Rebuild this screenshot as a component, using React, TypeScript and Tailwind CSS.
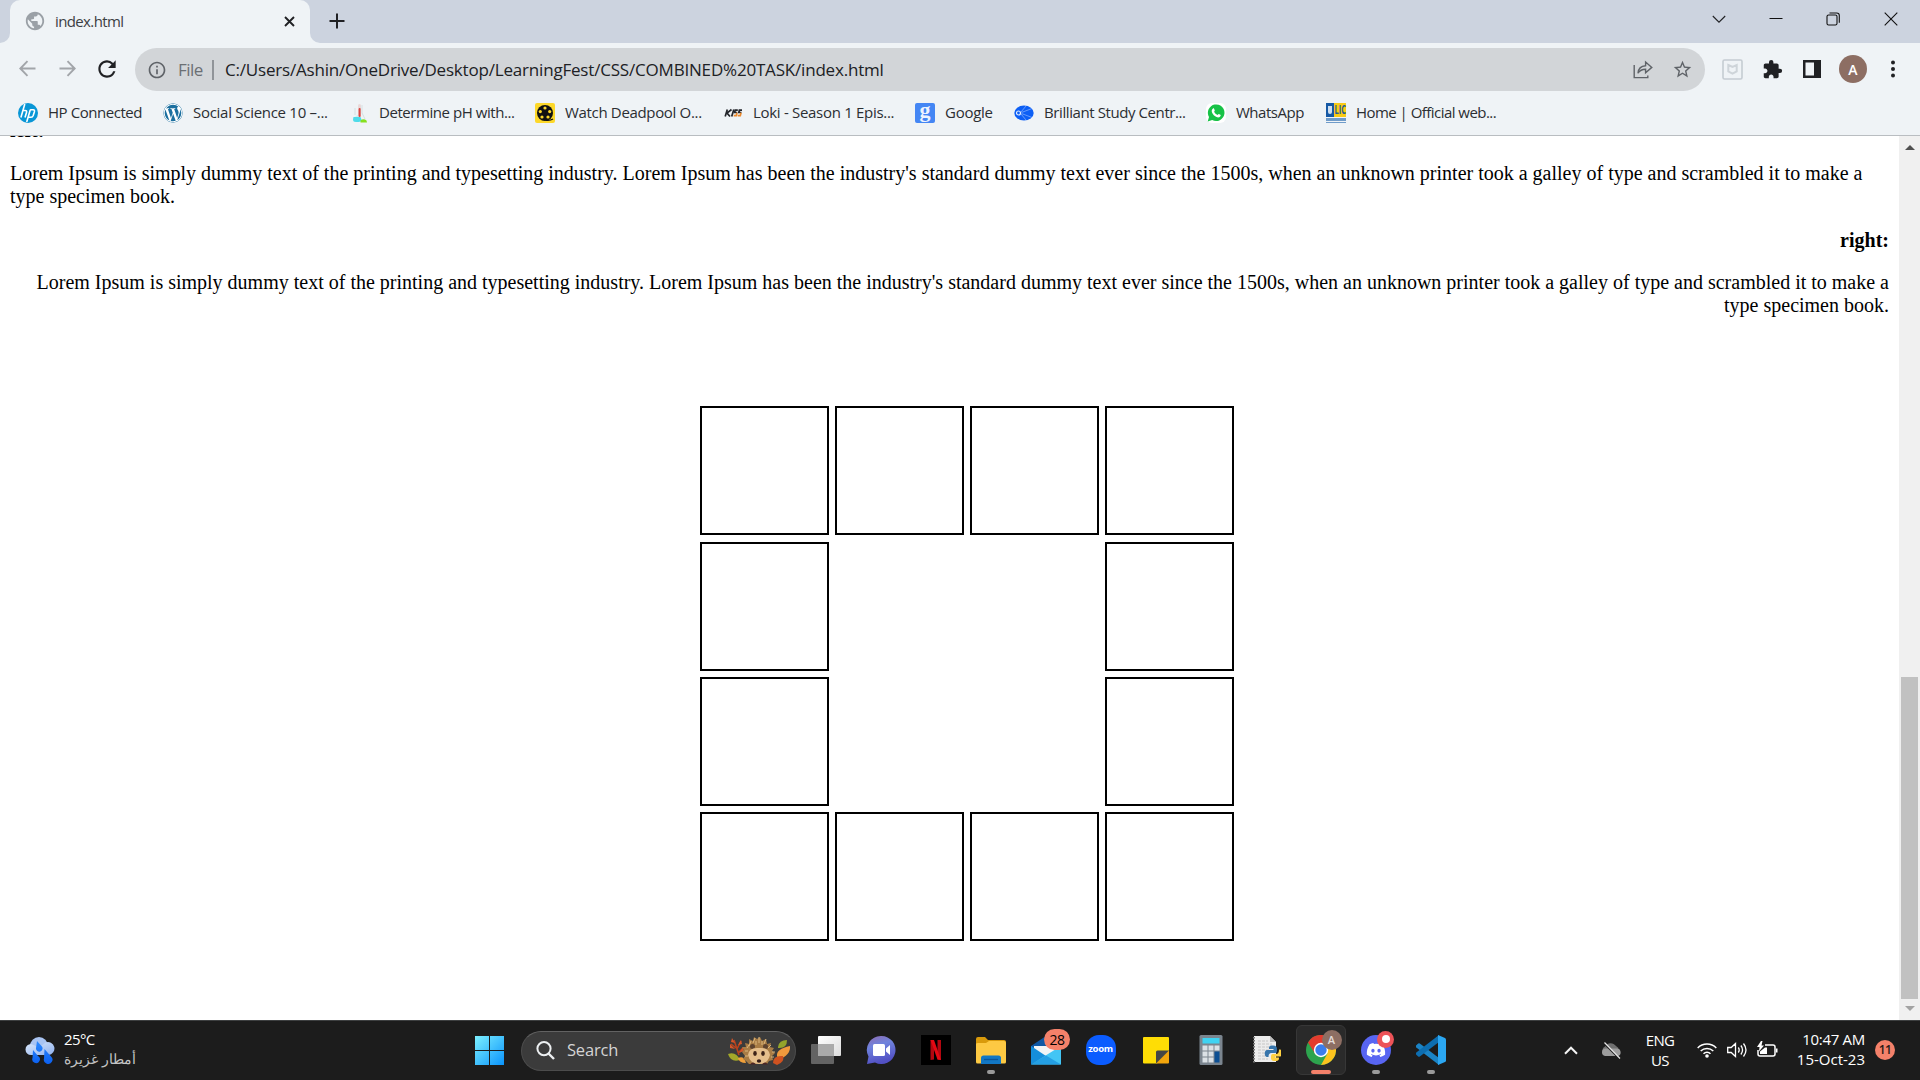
import type { ReactNode } from 'react';
import { MdPublic, MdInfoOutline, MdExtension, MdStarBorder, MdRefresh } from 'react-icons/md';
import { FaWordpress, FaDiscord } from 'react-icons/fa';

const LOREM =
  "Lorem Ipsum is simply dummy text of the printing and typesetting industry. Lorem Ipsum has been the industry's standard dummy text ever since the 1500s, when an unknown printer took a galley of type and scrambled it to make a type specimen book.";

function TabStrip() {
  return (
    <div className="flex h-[43px] items-stretch bg-[#ccd3df]">
      <svg className="h-[43px] w-[10px]" viewBox="0 0 10 43">
        <path d="M0 43h10V33a10 10 0 0 1-10 10z" fill="#eff3f6" />
      </svg>
      <div className="flex w-[300px] items-center rounded-t-[10px] bg-[#eff3f6] pr-[14px] pl-[14px]">
        <MdPublic className="-mt-px size-[22px] text-[#9aa0a6]" />
        <span className="ml-[9px] flex-1 pb-px text-[15px] tracking-[-0.62px] text-[#3c4043]">index.html</span>
        <svg className="size-[13px]" viewBox="0 0 13 13" stroke="#202124" strokeWidth="1.9">
          <path d="M2 2l9 9M11 2l-9 9" />
        </svg>
      </div>
      <svg className="h-[43px] w-[10px]" viewBox="0 0 10 43">
        <path d="M10 43H0V33a10 10 0 0 0 10 10z" fill="#eff3f6" />
      </svg>
      <svg className="mt-[13px] ml-[9px] size-4" viewBox="0 0 16 16" stroke="#202124" strokeWidth="2">
        <path d="M8 .5v15M.5 8h15" />
      </svg>
      <div className="ml-auto flex h-[37px] items-center pr-[22px]">
        <svg className="mr-[43px] size-[14px]" viewBox="0 0 14 14" fill="none" stroke="#202124" strokeWidth="1.1">
          <path d="M.8 4l6.2 6.2L13.2 4" />
        </svg>
        <svg className="mr-[43px] size-[14px]" viewBox="0 0 14 14" stroke="#111" strokeWidth="1">
          <path d="M.5 6.500h13" />
        </svg>
        <svg className="mr-[44px] size-[14px]" viewBox="0 0 14 14" fill="none" stroke="#111" strokeWidth="1.1">
          <rect x="1" y="3" width="10" height="10" rx="1.6" />
          <path d="M3.5 1h7.200a2.600 2.600 0 0 1 2.600 2.600v7.200" />
        </svg>
        <svg className="size-[14px]" viewBox="0 0 14 14" stroke="#111" strokeWidth="1.1">
          <path d="M.7.7l12.600 12.600M13.300.7L.7 13.300" />
        </svg>
      </div>
    </div>
  );
}

function Toolbar() {
  return (
    <div className="flex h-[53px] items-center bg-[#eff3f6]">
      <div className="flex items-center pb-[2px]">
        <svg className="ml-[19px] size-[17px]" viewBox="0 0 17 17" fill="none" stroke="#a2a5a9" strokeWidth="1.9">
          <path d="M16.500 8.500H1.500M8.500 1.200L1.300 8.500l7.200 7.300" />
        </svg>
        <svg className="ml-[23px] size-[17px]" viewBox="0 0 17 17" fill="none" stroke="#a2a5a9" strokeWidth="1.9">
          <path d="M.5 8.500h15M8.500 1.200l7.200 7.300-7.200 7.300" />
        </svg>
        <MdRefresh className="mr-px ml-[18px] size-[26px] text-[#202124]" />
      </div>
      <div className="ml-[14px] flex h-[43px] w-[1570px] items-center rounded-full bg-[#d2d5d8] pr-[12px] pl-[12px]">
        <MdInfoOutline className="size-5 text-[#5f6368]" />
        <span className="ml-[11px] w-[26px] text-[17px] tracking-[-0.5px] text-[#6b6f74]">File</span>
        <span className="ml-[8px] h-5 w-[2px] bg-[#909499]" />
        <span className="ml-[11px] text-[17px] tracking-[-0.19px] whitespace-nowrap text-[#202124]">
          C:/Users/Ashin/OneDrive/Desktop/LearningFest/CSS/COMBINED%20TASK/index.html
        </span>
        <svg className="ml-auto h-[19px] w-5" viewBox="0 0 20 19" fill="none" stroke="#5f6368" strokeWidth="1.4">
          <path d="M1.200 5v12.600h13.600v-2" />
          <path d="M5 13.200C5.300 8.600 8 6 12.600 5.700V2l6.200 5.400-6.200 5.400V9.300C9 9.300 6.800 10.300 5 13.200z" />
        </svg>
        <MdStarBorder className="ml-[19px] size-[21px] text-[#5f6368]" />
      </div>
      <div className="flex items-center pb-px">
        <svg className="ml-[17px] size-[21px]" viewBox="0 0 21 21" fill="none">
          <rect x="1" y="1" width="19" height="19" rx="1.500" stroke="#c5ccd2" strokeWidth="1.6" />
          <path d="M6.300 6l4.200 2 4.200-2v6.500l-4.200 2.200-4.200-2.200z" stroke="#ced4d9" strokeWidth="2" />
        </svg>
        <MdExtension className="ml-[19px] size-[21px] text-[#202124]" />
        <svg className="ml-[20px] size-[18px]" viewBox="0 0 18 18">
          <path d="M0 0h18v18H0zM2.500 2.500v13H11v-13z" fill="#202124" fillRule="evenodd" />
        </svg>
        <div className="ml-[18px] flex size-7 items-center justify-center rounded-full bg-[#8d6e63] text-[14px] font-semibold text-white">
          A
        </div>
        <svg className="ml-[23px] h-[18px] w-[6px]" viewBox="0 0 6 18" fill="#202124">
          <circle cx="3" cy="2.500" r="2" />
          <circle cx="3" cy="9" r="2" />
          <circle cx="3" cy="15.500" r="2" />
        </svg>
      </div>
    </div>
  );
}

function Bookmark({ icon, label, className }: { icon: ReactNode; label: string; className: string }) {
  return (
    <div className={`flex shrink-0 items-center text-[15px] whitespace-nowrap text-[#2b2e32] ${className}`}>
      <span className="mr-[10px] flex size-5 shrink-0 items-center justify-center">{icon}</span>
      {label}
    </div>
  );
}

const HpIcon = (
  <svg className="size-5" viewBox="0 0 20 20">
    <circle cx="10" cy="10" r="10" fill="#0996d6" />
    <g fill="none" stroke="#fff" strokeWidth="1.600">
      <path d="M6.800 1L2.900 14.500M4.600 7.500h2.600c1.300 0 1.700.7 1.300 1.900L7 14.500" />
      <path d="M12.300 6.700L8.700 19M12.300 6.800h2.800c1.200 0 1.600.7 1.300 1.900l-1.200 3.800c-.4 1.100-1 1.700-2.200 1.700h-2.600" />
    </g>
  </svg>
);

const FlaskIcon = (
  <svg className="size-5" viewBox="0 0 20 20">
    <path d="M8.500 12l-2 1.500Q3.500 15 4 17q.5 2 3.500 2h4q2-1 1-3l-2-3z" fill="#c9f1f5" />
    <path d="M4.500 14h7l1 3q-.5 2-3 2H7q-3 0-3-2.500z" fill="#4fdbe9" />
    <path d="M6 5v7M13 2v8l3 6" stroke="#d5dfe2" strokeWidth="1" fill="none" />
    <rect x="9" y="1" width="3" height="13" rx="1.500" fill="#e9d9d9" />
    <rect x="9.600" y="5" width="2" height="9" rx="1" fill="#d9443f" />
    <path d="M11.500 17.500q3-2.500 6 0l.5 2h-6.500z" fill="#86e01f" />
  </svg>
);

const ReelIcon = (
  <svg className="size-5" viewBox="0 0 20 20">
    <rect width="20" height="20" rx="2" fill="#fdd829" />
    <circle cx="10" cy="10" r="8" fill="#111" />
    <path d="M11 17.200q4 .6 7-1.200" stroke="#111" strokeWidth="1.400" fill="none" />
    <g fill="#fdd829">
      <circle cx="10" cy="5" r="1.600" />
      <circle cx="5.300" cy="8.600" r="1.600" />
      <circle cx="14.700" cy="8.600" r="1.600" />
      <circle cx="7" cy="14" r="1.600" />
      <circle cx="13" cy="14" r="1.600" />
    </g>
  </svg>
);

const KissIcon = (
  <svg className="size-5" viewBox="0 0 20 20" fill="none" strokeWidth="1.700">
    <path d="M4.300 6.500L2.200 13.500M8.500 6.500L4 10l3 3.500M10.800 6.500L8.700 13.500" stroke="#23252b" />
    <path d="M14.800 7.200h-2.600l-.6 2.300h2.600M19 7.200h-2.600l-.6 2.300h2.600" stroke="#23252b" />
    <path d="M14 9.800l-.7 2.800h-2.600M18 9.800l-.7 2.800h-2.600" stroke="#ea8a2f" />
  </svg>
);

const GoogleIcon = (
  <span className="flex size-5 items-center justify-center rounded-[2px] bg-[#4486f4] pb-[5px] font-['Liberation_Serif',serif] text-[22px] leading-5 font-bold tracking-normal text-[#eef4ff]">
    g
  </span>
);

const BrilliantIcon = (
  <svg className="size-5" viewBox="0 0 20 20">
    <ellipse cx="10" cy="10" rx="9.700" ry="7.600" fill="#0d5ff5" />
    <path d="M7 9L12 3M7.500 9.500L18 5.500M7.500 10.500L18 14.500M7 11l5 6" stroke="#8db5ff" strokeWidth=".7" />
    <circle cx="4.500" cy="10" r="2" fill="#0d5ff5" stroke="#dfeaff" strokeWidth="1.200" />
  </svg>
);

const WhatsAppIcon = (
  <span className="flex size-5 items-center justify-center rounded-md bg-white">
    <svg className="size-[18px]" viewBox="0 0 18 18">
      <path d="M.7 17.500l1.300-4.600A8.300 8.300 0 1 1 5.200 16z" fill="#17c247" />
      <path
        d="M6 4.500c.4-.3.900-.2 1.100.3l.7 1.600c.1.500-.7 1-.7 1.400.8 1.500 1.900 2.500 3.300 3.100.5 0 .9-1 1.400-.9l1.600.8c.8.5-.1 2.200-1.100 2.500-3.300.8-7.800-3.600-7.600-6.600.1-.9.600-1.700 1.300-2.200z"
        fill="#fff"
      />
    </svg>
  </span>
);

const LicIcon = (
  <span className="flex h-5 w-5 flex-col leading-none">
    <span className="flex h-[14px] shrink-0">
      <span className="flex w-[8px] shrink-0 items-center justify-center bg-[#1659a5]">
        <span className="h-[8px] w-[4px] rounded-b-full bg-[#cfdff0]" />
      </span>
      <span className="flex w-[12px] shrink-0 items-center justify-center bg-[#f9cb15]">
        <span className="scale-x-[0.62] text-[12px] font-bold tracking-normal text-[#1f5b96]">LIC</span>
      </span>
    </span>
    <span className="mt-px h-[3px] shrink-0 bg-[#6f9bc9]" />
    <span className="mt-px h-px shrink-0 bg-[#6f9bc9]" />
  </span>
);

function BookmarksBar() {
  return (
    <div className="flex h-[40px] items-center border-b border-[#b9bdc1] bg-[#eff3f6] pb-[6px] pl-[18px]">
      <Bookmark className="w-[145px] tracking-[-0.450px]" label="HP Connected" icon={HpIcon} />
      <Bookmark
        className="w-[186px] tracking-[-0.280px]"
        label="Social Science 10 –..."
        icon={<FaWordpress className="size-5 rounded-full bg-white text-[#1c6f9f]" />}
      />
      <Bookmark className="w-[186px] tracking-[-0.440px]" label="Determine pH with..." icon={FlaskIcon} />
      <Bookmark className="w-[188px] tracking-[-0.330px]" label="Watch Deadpool O..." icon={ReelIcon} />
      <Bookmark className="w-[192px] tracking-[-0.300px]" label="Loki - Season 1 Epis..." icon={KissIcon} />
      <Bookmark className="w-[99px] tracking-[-0.260px]" label="Google" icon={GoogleIcon} />
      <Bookmark className="w-[192px] tracking-[-0.410px]" label="Brilliant Study Centr..." icon={BrilliantIcon} />
      <Bookmark className="w-[120px] tracking-[-0.480px]" label="WhatsApp" icon={WhatsAppIcon} />
      <Bookmark className="w-[172px] tracking-[-0.540px]" label="Home | Official web..." icon={LicIcon} />
    </div>
  );
}

const Box = () => <div className="size-[129px] border-2 border-black" />;

function BoxRow({ hollow = false }: { hollow?: boolean }) {
  return (
    <div className="flex w-[534px] justify-between">
      <Box />
      {!hollow && <Box />}
      {!hollow && <Box />}
      <Box />
    </div>
  );
}

function Page() {
  return (
    <div className="flex h-[884px] overflow-hidden bg-white">
      <main className="-mt-[17px] flex-1 px-[10px] font-['Liberation_Serif','Times_New_Roman',serif] text-[20px] leading-[23px] text-black">
        <p className="mb-[20px] font-bold">left:</p>
        <p>{LOREM}</p>
        <div className="text-right">
          <p className="mt-[21px] font-bold">right:</p>
          <p className="mt-[19px]">{LOREM}</p>
        </div>
        <div className="mt-[89px] ml-[690px] flex flex-col gap-[6px]">
          <div className="mb-px">
            <BoxRow />
          </div>
          <BoxRow hollow />
          <BoxRow hollow />
          <BoxRow />
        </div>
      </main>
      <div className="flex w-[21px] flex-col items-center bg-[#f0f0f0]">
        <svg className="mt-[9px] h-[5px] w-[10px]" viewBox="0 0 10 5">
          <path d="M0 5L5 0l5 5z" fill="#505050" />
        </svg>
        <div className="mt-auto h-[322px] w-[17px] bg-[#c1c1c1]" />
        <svg className="mt-[7px] mb-[9px] h-[5px] w-[10px]" viewBox="0 0 10 5">
          <path d="M0 0l5 5 5-5z" fill="#a3a3a3" />
        </svg>
      </div>
    </div>
  );
}

function WeatherIcon() {
  return (
    <svg className="size-[30px]" viewBox="0 0 30 30">
      <defs>
        <linearGradient id="cloud" x1="0" y1="0" x2="1" y2="1">
          <stop offset="0" stopColor="#dbe9fc" />
          <stop offset="1" stopColor="#8fb1ee" />
        </linearGradient>
        <linearGradient id="drop" x1="0" y1="0" x2="0" y2="1">
          <stop offset="0" stopColor="#2f8bff" />
          <stop offset="1" stopColor="#0b60f0" />
        </linearGradient>
      </defs>
      <circle cx="14" cy="11" r="9" fill="#a9c4f2" />
      <path d="M6 9a5.500 5.500 0 0 0 0 11h17.500a6.500 6.500 0 1 0-3-12.500l-6 5z" fill="url(#cloud)" />
      <path
        d="M12 6l4.500 5a3.300 3.300 0 1 1-5.500 2zM8 15l5 6a3.800 3.800 0 1 1-5.500 2zM19.500 14l6.500 7.500a4.300 4.300 0 1 1-7 2z"
        fill="url(#drop)"
      />
    </svg>
  );
}

function SearchArt() {
  return (
    <svg className="h-[29px] w-[63px]" viewBox="0 0 63 29">
      <path d="M11 19L6 4M9 13l4-8M10 17l5-5M8 12L3 8" stroke="#b5421d" strokeWidth="1.600" />
      <path d="M4 2l3 5-4-1zM13 4l-3 5 4-1zM2 8l5 5-5-1zM15 11l-4 6 5-2z" fill="#d5572a" />
      <path d="M0 18q8-3 12 6-9 3-12-6z" fill="#a3a829" />
      <path d="M10 22q6-3 8 5-7 0-8-5z" fill="#f0a03a" />
      <path d="M50 11q1-7 9-7 0 9-9 8z" fill="#94a52b" />
      <path d="M49 20q-1-7 13-10 1 9-12 14z" fill="#f09a3d" />
      <path d="M45 27q0-8 10-7 2 6-6 9z" fill="#cf5220" />
      <path
        d="M14 16l2-2-2-3 4 0-1-4 4 1 0-5 4 2 1-4 3 2 3-2 2 4 4-2 1 5 4-1-1 4 4 1-2 3 3 2-3 3 1 4-4 1-2 3H21l-3-3-3-2 2-3z"
        fill="#a87c45"
      />
      <path
        d="M21 10l2-5M25 7l2-5M31 7V1M36 8l2-5M40 12l3-3M17 15h3M44 16h3M17 20h3M43 21h3M28 9V5M34 9V5M19 12l2-3"
        stroke="#e0bd84"
        strokeWidth=".9"
      />
      <circle cx="24.500" cy="10.500" r="2.500" fill="#5e432f" />
      <circle cx="37.500" cy="10.500" r="2.500" fill="#5e432f" />
      <path d="M20 19q1-8 11-7 10-1 11 7-2 9-11 9t-11-9z" fill="#e5bf8c" />
      <ellipse cx="27" cy="17.500" rx="1.800" ry="2.400" fill="#3c2318" />
      <ellipse cx="35" cy="17.500" rx="1.800" ry="2.400" fill="#3c2318" />
      <ellipse cx="31" cy="25" rx="2.200" ry="1.700" fill="#331b17" />
      <path d="M22 28.500q3-4 6 0zM34 28.500q3-4 6 0z" fill="#4b2525" />
    </svg>
  );
}

/** One taskbar slot, with its optional running marker below the icon. */
function TaskbarSlot({ children, running = false }: { children: ReactNode; running?: boolean }) {
  return (
    <div className="relative flex h-[59px] w-[55px] shrink-0 items-center justify-center">
      {children}
      {running && <span className="absolute bottom-[6px] left-[24px] h-1 w-2 rounded-full bg-[#9a9a9a]" />}
    </div>
  );
}

function Taskbar() {
  return (
    <footer className="flex h-[60px] items-center border-t border-[#3d3f40] bg-[#1c1c1c] text-[15px] text-white">
      <div className="flex w-[475px] items-center gap-[9px] pb-[2px] pl-[25px]">
        <WeatherIcon />
        <div className="pb-[2px] leading-5">
          <div className="tracking-[-0.600px]">25°C</div>
          <div className="text-[14.200px] text-[#c4c4c4]" dir="rtl">
            أمطار غزيرة
          </div>
        </div>
      </div>
      <svg className="size-[29px]" viewBox="0 0 29 29">
        <defs>
          <linearGradient id="win" x1="0" y1="0" x2="1" y2="1">
            <stop offset="0" stopColor="#7cf0ff" />
            <stop offset="1" stopColor="#0a93fb" />
          </linearGradient>
        </defs>
        <path d="M0 0h14v14H0zM15 0h14v14H15zM0 15h14v14H0zM15 15h14v14H15z" fill="url(#win)" />
      </svg>
      <div className="ml-[17px] flex h-10 w-[275px] items-center rounded-full border border-[#4c4c4c] border-t-[#626262] bg-[#3b3b3b] pr-[4px] pl-[14px]">
        <svg className="size-[19px]" viewBox="0 0 19 19" fill="none" stroke="#eceff1" strokeWidth="2">
          <circle cx="8" cy="7.600" r="6.600" />
          <path d="M12.500 12.500l5.500 5.500" strokeWidth="2.400" />
        </svg>
        <span className="ml-[12px] flex-1 text-[16.500px] tracking-[-0.200px] text-[#d4d4d4]">Search</span>
        <SearchArt />
      </div>
      <div className="ml-[2px] flex pb-px">
        <TaskbarSlot>
          <svg className="size-[30px]" viewBox="0 0 30 30">
            <defs>
              <linearGradient id="tv" x1="0" y1="0" x2="1" y2="1">
                <stop offset="0" stopColor="#ffffff" />
                <stop offset="1" stopColor="#dcdcdc" />
              </linearGradient>
            </defs>
            <rect x="7" y="1" width="23" height="20" rx="1" fill="url(#tv)" />
            <rect x="0" y="9" width="23" height="20" rx="1" fill="#636363" />
            <path d="M7 9h16v12H7z" fill="#aaaaaa" />
          </svg>
        </TaskbarSlot>
        <TaskbarSlot>
          <svg className="size-[30px]" viewBox="0 0 30 30">
            <defs>
              <linearGradient id="chat" x1="0" y1="0" x2="0.300" y2="1">
                <stop offset="0" stopColor="#8f6bb0" />
                <stop offset="0.400" stopColor="#6f83dd" />
                <stop offset="1" stopColor="#5250c4" />
              </linearGradient>
            </defs>
            <path d="M15.500 1A14 14 0 1 1 9 27.400L1 29l1.500-7.500A14 14 0 0 1 15.500 1z" fill="url(#chat)" />
            <rect x="7" y="9" width="12" height="12" rx="1.500" fill="#fff" />
            <path d="M20 13.500l4-3.500v10l-4-3.500z" fill="#fff" />
          </svg>
        </TaskbarSlot>
        <TaskbarSlot>
          <svg className="size-[30px]" viewBox="0 0 30 30">
            <rect width="30" height="30" fill="#000" />
            <path d="M9.500 5h3.500v19.500l-3.500.5zM16.500 5H20v20l-3.500-.5z" fill="#b20710" />
            <path d="M9.500 5H13l7 20-3.500-.5z" fill="#e50914" />
          </svg>
        </TaskbarSlot>
        <TaskbarSlot running>
          <svg className="size-[30px]" viewBox="0 0 30 30">
            <path d="M0 4q0-2 2-2h7l3 3h16q2 0 2 2v5H0z" fill="#d99a0b" />
            <path d="M0 9q0-1 2-1h8l3-2h15q2 0 2 2v19q0 1.500-1.500 1.500H1.500Q0 28.500 0 27z" fill="#fdc943" />
            <path d="M5 29v-6q0-2.500 2.500-2.500h15Q25 20.500 25 23v6z" fill="#1277c4" />
            <path d="M8 24.500h14" stroke="#0b559a" strokeWidth="1.300" />
          </svg>
        </TaskbarSlot>
        <TaskbarSlot>
          <svg className="size-[30px]" viewBox="0 0 30 30">
            <path d="M0 11L15 1l15 10v5L15 24 0 16z" fill="#0e57a4" />
            <path d="M3 11h24v6l-12 5L3 15z" fill="#f1f4f6" />
            <path d="M0 11l15 10L0 29.500z" fill="#158edb" />
            <path d="M30 11L0 29.500h30z" fill="#43c5f5" />
            <path d="M15 20.500L30 29.500H0z" fill="#249fe4" />
          </svg>
          <span className="absolute top-[8px] left-[26px] flex h-[21px] w-[26px] items-center justify-center rounded-full bg-[#f4816a] text-[14px] tracking-[-0.500px] text-black">
            28
          </span>
        </TaskbarSlot>
        <TaskbarSlot>
          <div className="flex size-[30px] items-center justify-center rounded-[13px] bg-[#0b5cff] pb-[2px] text-[9.500px] font-bold tracking-[-0.300px] text-white">
            zoom
          </div>
        </TaskbarSlot>
        <TaskbarSlot>
          <svg className="size-[30px]" viewBox="0 0 30 30">
            <path d="M2 3q0-1 1-1h24q1 0 1 1v13L16 28.500H3q-1 0-1-1z" fill="#ffdd05" />
            <path d="M15 28.500L28 15v12.500q0 1-1 1z" fill="#f2a50c" />
            <path d="M15 28.500V17q0-1.500 1.500-1.500H28z" fill="#454545" />
          </svg>
        </TaskbarSlot>
        <TaskbarSlot>
          <svg className="size-[30px]" viewBox="0 0 30 30">
            <rect x="3.500" width="23" height="30" rx="1.500" fill="#7b858f" />
            <rect x="6.500" y="3" width="17" height="5.500" fill="#3fd3f2" />
            <path
              d="M6.500 10.500h5v5h-5zM12.500 10.500h5v5h-5zM18.500 10.500h5v5h-5zM6.500 16.500h5v5h-5zM12.500 16.500h5v5h-5zM6.500 22.500h5v5h-5zM12.500 22.500h5v5h-5z"
              fill="#dbe1e6"
            />
            <path d="M18.500 16.500h5v11h-5z" fill="#0d4f93" />
          </svg>
        </TaskbarSlot>
        <TaskbarSlot>
          <svg className="size-[30px]" viewBox="0 0 30 30">
            <path d="M3 1h16l6 6v20H3z" fill="#ececec" />
            <path d="M19 1l6 6h-6z" fill="#bdbdbd" />
            <path d="M3 2v26" stroke="#777" strokeWidth="2" strokeDasharray="1.500 1.500" />
            <path
              d="M7 6h10M7 9h14M7 12h14M7 15h12M7 18h8M7 21h8M7 24h10"
              stroke="#c6c6c6"
              strokeWidth="1"
              strokeDasharray="3 1"
            />
            <path
              d="M22 10.500c-4 0-4 1.200-4 3.500h4.500v1H16c-3 0-3 7 0 7h1.500c0-3 1-4 3-4H24c2 0 2-1.200 2-4 0-2-1-3.500-4-3.500z"
              fill="#3775ab"
            />
            <path
              d="M24 26c4 0 4-1.200 4-3.500h-4v-1h5.500c2-1 1-6 0-7H28c0 3-1 4.500-3 4.500h-3c-2 0-2 1.200-2 3.500S20.500 26 24 26z"
              fill="#ffd141"
            />
          </svg>
        </TaskbarSlot>
        <TaskbarSlot>
          <div className="relative flex h-[50px] w-[50px] items-center justify-center rounded-md border border-[#373737] bg-[#2a2a2a]">
            <svg className="size-[30px]" viewBox="0 0 30 30">
              <circle cx="15" cy="15" r="15" fill="#2da44e" />
              <path d="M15 8.200h13.400A15 15 0 0 1 15 30l6.500-11.500z" fill="#fcc31e" />
              <path d="M2 7.500A15 15 0 0 1 28.400 8.200H15L9 18.500z" fill="#e33b2e" />
              <circle cx="15" cy="15" r="7.200" fill="#fff" />
              <circle cx="15" cy="15" r="5.700" fill="#3b7ded" />
            </svg>
            <span className="absolute top-[4px] left-[25px] flex size-5 items-center justify-center rounded-full bg-[#8d6e63] text-[11px] font-semibold text-[#e4dcd9]">
              A
            </span>
            <span className="absolute bottom-0 left-[14px] h-1 w-5 rounded-full bg-[#f4816a]" />
          </div>
        </TaskbarSlot>
        <TaskbarSlot running>
          <div className="flex size-[30px] items-center justify-center rounded-full bg-[#5865f2]">
            <FaDiscord className="size-[20px]" />
          </div>
          <span className="absolute top-[10px] left-[29px] flex size-[17px] items-center justify-center rounded-full bg-[#ed5358]">
            <span className="size-2 rounded-full bg-white" />
          </span>
        </TaskbarSlot>
        <TaskbarSlot running>
          <svg className="size-[30px]" viewBox="0 0 30 30">
            <path d="M0 10.500l2.200-2q.8-.5 1.600 0L23 23v7L.3 12.500q-.8-1-.3-2z" fill="#1b84c6" />
            <path d="M0 19.500l2.200 2q.8.500 1.600 0L23 7V0L.3 17.500q-.8 1-.3 2z" fill="#0d6eb1" />
            <path d="M22 0l7 3q1 .5 1 1.500v21q0 1-1 1.500l-7 3z" fill="#2ba7f2" />
          </svg>
        </TaskbarSlot>
      </div>
      <div className="ml-auto flex items-center pr-[25px] pb-px">
        <svg className="mr-[23px] h-[9px] w-[14px]" viewBox="0 0 14 9" fill="none" stroke="#f4f4f4" strokeWidth="2">
          <path d="M1 7.700l6-6 6 6" />
        </svg>
        <svg className="mr-[24px] h-[18px] w-5" viewBox="0 0 20 18">
          <path d="M5 14a4.500 4.500 0 0 1-1-8.500A6.500 6.500 0 0 1 15 5a5 5 0 0 1 0 9z" fill="#6f6f6f" />
          <path d="M4 15a3.800 3.800 0 0 1 .5-7.500l10.500 0a3.800 3.800 0 0 1 1.500 7.500z" fill="#9c9c9c" />
          <path d="M3 2.500l14.500 14.500" stroke="#1c1c1c" strokeWidth="1.400" />
          <path d="M3.500 1.500l15.500 16" stroke="#e8e8e8" strokeWidth="1.200" />
        </svg>
        <div className="mr-[22px] w-[30px] pb-px text-center leading-5 tracking-[-0.700px]">
          ENG
          <br />
          US
        </div>
        <svg className="mr-[10px] h-[16px] w-5" viewBox="0 0 20 16" fill="none" stroke="#fff" strokeWidth="1.500">
          <path d="M.7 6a13 13 0 0 1 18.600 0M3.700 9a9 9 0 0 1 12.600 0M6.500 11.800a5 5 0 0 1 7 0" />
          <circle cx="10" cy="14" r="1.800" fill="#fff" stroke="none" />
        </svg>
        <svg className="mr-[10px] h-[16px] w-5" viewBox="0 0 20 16" fill="none" stroke="#fff" strokeWidth="1.300">
          <path d="M.7 5.500h3.500L8.500 1.500v13L4.200 10.500H.7zM11.300 5.500q1.800 2.500 0 5M13.900 3.500q3.300 4.500 0 9M16.500 1.500q5 6.500 0 13" />
        </svg>
        <svg className="mr-[18px] h-[18px] w-[21px]" viewBox="0 0 21 18" fill="none" stroke="#fff" strokeWidth="1.500">
          <path d="M8 4h8q2 0 2 2v7q0 2-2 2H3q-2 0-2-2V9" />
          <path d="M19 7.500h1.500v4H19z" fill="#fff" stroke="none" />
          <path d="M3 13v-2.500l5-4h2V13z" fill="#fff" stroke="none" />
          <path d="M4 0L0 6h2.500L2 10.500 7 4.500H4.500L5.500 0z" fill="#fff" stroke="none" />
        </svg>
        <div className="mr-[10px] w-[69px] pb-[3px] text-right leading-5 whitespace-nowrap">
          <div className="tracking-[-0.300px]">10:47 AM</div>
          <div>15-Oct-23</div>
        </div>
        <div className="flex size-5 items-center justify-center rounded-full bg-[#f4816a] text-[12px] font-semibold tracking-[-0.500px] text-[#2a1a16]">
          11
        </div>
      </div>
    </footer>
  );
}

export default function App() {
  return (
    <div className="flex h-[1080px] w-[1920px] flex-col overflow-hidden font-['Open_Sans','Noto_Sans',sans-serif]">
      <header>
        <TabStrip />
        <Toolbar />
        <BookmarksBar />
      </header>
      <Page />
      <Taskbar />
    </div>
  );
}
